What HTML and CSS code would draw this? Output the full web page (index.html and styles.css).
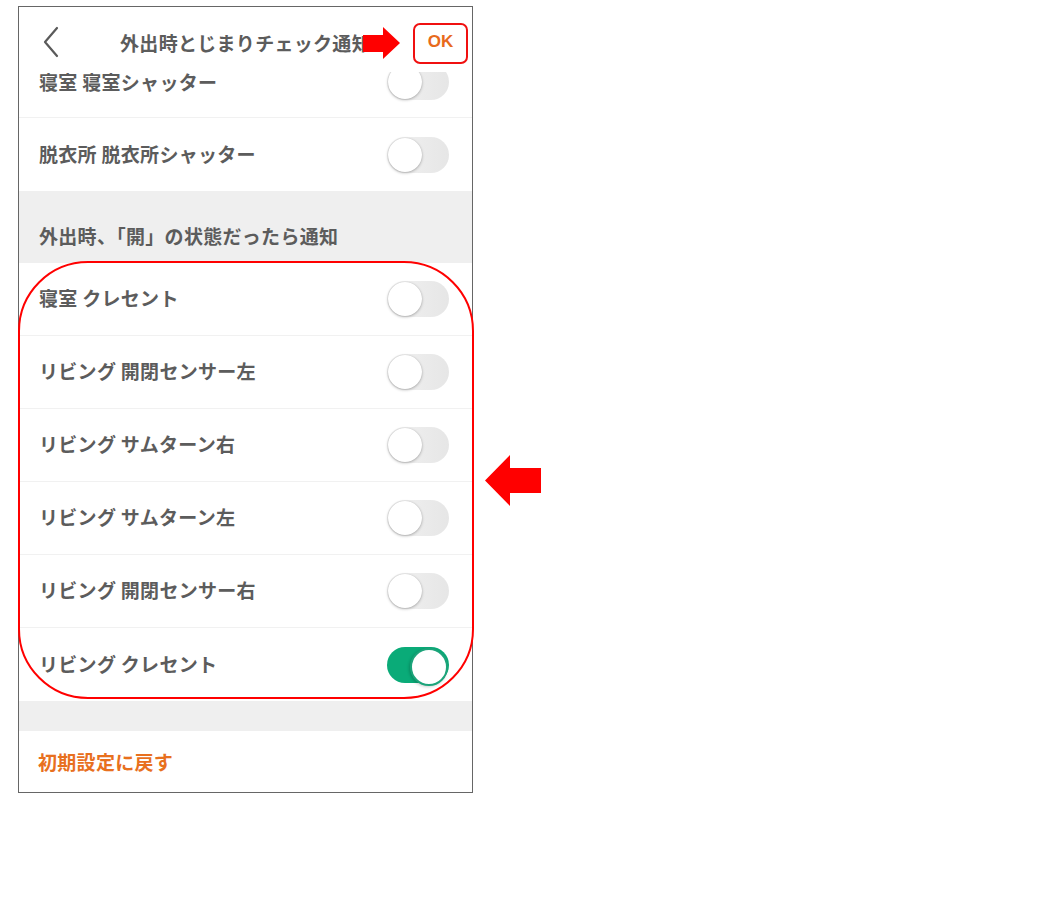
FILE: index.html
```html
<!DOCTYPE html>
<html lang="ja">
<head>
<meta charset="utf-8">
<link rel="stylesheet" href="styles.css">
</head>
<body>
<div class="page">
  <div class="phone">
    <header class="nav">
      <svg class="back" width="18" height="32" viewBox="0 0 18 32"><path d="M15 2 L3 16 L15 30" fill="none" stroke="#5a5a5a" stroke-width="2.2" stroke-linecap="round" stroke-linejoin="round"/></svg>
      <div class="title">外出時とじまりチェック通知</div>
      <div class="ok">OK</div>
    </header>
    <div class="scroll">
      <div class="row first"><span class="label">寝室 寝室シャッター</span><span class="toggle"></span></div>
      <div class="row last"><span class="label">脱衣所 脱衣所シャッター</span><span class="toggle"></span></div>
      <div class="section">外出時、「開」の状態だったら通知</div>
      <div class="row"><span class="label">寝室 クレセント</span><span class="toggle"></span></div>
      <div class="row"><span class="label">リビング 開閉センサー左</span><span class="toggle"></span></div>
      <div class="row"><span class="label">リビング サムターン右</span><span class="toggle"></span></div>
      <div class="row"><span class="label">リビング サムターン左</span><span class="toggle"></span></div>
      <div class="row"><span class="label">リビング 開閉センサー右</span><span class="toggle"></span></div>
      <div class="row last"><span class="label">リビング クレセント</span><span class="toggle on"></span></div>
      <div class="spacer"></div>
      <div class="reset">初期設定に戻す</div>
    </div>
  </div>
  <div class="highlight"></div>
  <svg class="arrow-right" width="38" height="32" viewBox="0 0 38 32"><polygon points="0,8 20,8 20,0 37,16 20,32 20,25 0,25" fill="#ff0000"/></svg>
  <svg class="arrow-left" width="57" height="51" viewBox="0 0 57 51"><polygon points="0,25.5 25,0 25,13 56,13 56,38 25,38 25,51" fill="#ff0000"/></svg>
</div>
</body>
</html>
```
FILE: styles.css
```css
* { box-sizing: border-box; }
html, body { margin: 0; padding: 0; background: #fff; }
body {
  font-family: "Noto Sans CJK JP", "Noto Sans", sans-serif;
  width: 1058px;
  height: 906px;
  overflow: hidden;
}
.page {
  position: relative;
  padding: 6px 0 0 18px;
}
.phone {
  width: 455px;
  height: 787px;
  border: 1px solid #666;
  display: flex;
  flex-direction: column;
  overflow: hidden;
  background: #fff;
}
.nav {
  position: relative;
  z-index: 2;
  height: 65px;
  flex: none;
  background: #fff;
  display: flex;
  align-items: center;
  padding: 0 0 0 23px;
}
.back { flex: none; margin-top: 4px; }
.title {
  position: absolute;
  left: 0;
  right: 0;
  top: 23px;
  text-align: center;
  font-size: 19px;
  line-height: 26px;
  font-weight: 700;
  letter-spacing: 0.3px;
  color: #5c5c5c;
  pointer-events: none;
}
.ok {
  position: absolute;
  left: 394px;
  top: 16px;
  width: 55px;
  height: 41px;
  border: 2px solid #f01010;
  border-radius: 7px;
  color: #e86a1c;
  font-family: "Liberation Sans", Arial, sans-serif;
  font-weight: 700;
  font-size: 17px;
  display: flex;
  align-items: center;
  justify-content: center;
  padding-bottom: 3px;
  background: #fff;
}
.scroll {
  flex: 1;
  display: flex;
  flex-direction: column;
}
.row {
  flex: none;
  height: 73px;
  display: flex;
  align-items: center;
  justify-content: space-between;
  padding: 0 23px 0 20px;
  border-bottom: 1px solid #f1f1f1;
}
.row.first {
  height: 46px;
  align-items: flex-end;
  padding-bottom: 17px;
}
.row.first .label { margin-bottom: 6px; line-height: 20px; }
.row.last { border-bottom: none; }
.label {
  font-size: 19px;
  font-weight: 700;
  letter-spacing: 0.3px;
  color: #5c5c5c;
  line-height: 24px;
  padding-bottom: 2px;
}
.toggle {
  position: relative;
  width: 62px;
  height: 36px;
  border-radius: 18px;
  background: linear-gradient(to right, #f2f2f2, #e6e6e6);
  flex: none;
}
.toggle::after {
  content: "";
  position: absolute;
  left: 1px;
  top: 1px;
  width: 34px;
  height: 34px;
  border-radius: 50%;
  background: #fff;
  box-shadow: 0 1px 3px rgba(0,0,0,0.28), 0 0 1px rgba(0,0,0,0.15);
}
.toggle.on { background: #0aab78; }
.toggle.on::after {
  left: auto;
  right: 1px;
  border: 2px solid #1ca47a;
  box-shadow: -1px 1px 3px rgba(0,0,0,0.2);
}
.section {
  flex: none;
  height: 72px;
  background: #efefef;
  padding: 33px 0 0 20px;
  font-size: 19px;
  line-height: 24px;
  font-weight: 700;
  letter-spacing: 0.3px;
  color: #5c5c5c;
}
.spacer {
  flex: none;
  height: 30px;
  background: #efefef;
}
.reset {
  flex: 1;
  display: flex;
  align-items: center;
  padding: 0 0 0 19px;
  font-size: 19px;
  font-weight: 700;
  letter-spacing: 0.3px;
  color: #e8701e;
}
.highlight {
  position: absolute;
  z-index: 4;
  left: 18px;
  top: 261px;
  width: 456px;
  height: 438px;
  border: 2px solid #f00;
  border-radius: 70px;
  pointer-events: none;
}
.arrow-right {
  position: absolute;
  z-index: 5;
  left: 363px;
  top: 27px;
}
.arrow-left {
  position: absolute;
  z-index: 5;
  left: 485px;
  top: 455px;
}
```
